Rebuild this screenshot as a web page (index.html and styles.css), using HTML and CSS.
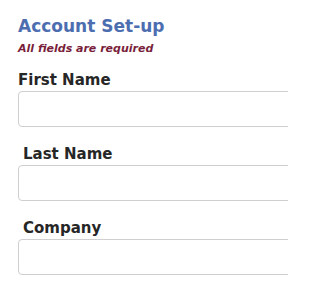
FILE: index.html
```html
<!DOCTYPE html>
<html>
<head>
<meta charset="utf-8">
<link rel="stylesheet" href="styles.css">
</head>
<body>
<div class="frame">
<form class="setup">
  <h1 class="title">Account Set-up</h1>
  <p class="note">All fields are required</p>
  <div class="field">
    <label class="label">First Name</label>
    <input class="input" type="text">
  </div>
  <div class="field field-indent">
    <label class="label">Last Name</label>
    <input class="input" type="text">
  </div>
  <div class="field field-indent">
    <label class="label">Company</label>
    <input class="input" type="text">
  </div>
</form>
</div>
</body>
</html>
```
FILE: styles.css
```css
html, body {
  margin: 0;
  padding: 0;
  background: #fff;
  overflow: hidden;
}
.frame {
  width: 288px;
  height: 288px;
  overflow: hidden;
}
.setup {
  padding: 15px 0 0 18px;
  font-family: "DejaVu Sans", sans-serif;
}
.title {
  margin: 0;
  font-size: 17px;
  font-weight: bold;
  color: #4c6eb0;
  line-height: 22px;
}
.note {
  margin: 5px 0 0;
  font-size: 11px;
  font-style: italic;
  font-weight: bold;
  color: #7a1f3b;
  line-height: 14px;
}
.field {
  display: flex;
  flex-direction: column;
  margin-top: 15px;
}
.field + .field {
  margin-top: 18px;
}
.label {
  font-size: 15px;
  font-weight: bold;
  color: #262626;
  line-height: 18px;
  margin-bottom: 2px;
}
.field-indent .label {
  padding-left: 5px;
}
.input {
  box-sizing: border-box;
  width: 300px;
  height: 36px;
  border: 1px solid #cfcfcf;
  border-radius: 4px;
  margin: 0;
  background: #fff;
}
```
